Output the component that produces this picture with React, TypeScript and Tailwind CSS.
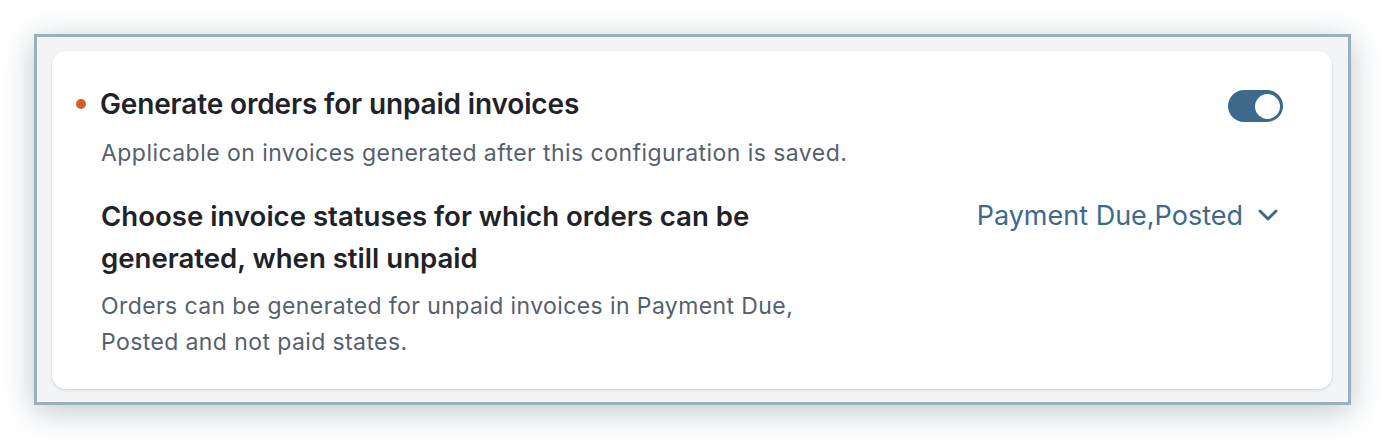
import React from "react";

export default function App() {
  return (
    <div className="w-[1386px] h-[440px] bg-white p-[34px] pr-[35px]" style={{ fontFamily: "Inter, 'Noto Sans', sans-serif" }}>
      <div className="h-[371px] border-[3px] border-[#9ab0bd] bg-[#f3f4f6] pt-[14px] pl-[15px] pr-[16px] shadow-[0_6px_30px_rgba(90,115,130,0.4)]">
        <div className="h-[338px] rounded-[14px] bg-white pl-[24px] pr-[49px] pt-[37px] shadow-[0_1px_3px_rgba(0,0,0,0.15)]">
          <div className="flex items-start justify-between">
            <div className="flex h-[32px] items-center gap-[14px]">
              <span className="h-[10px] w-[10px] rounded-full bg-[#d25e2b]" />
              <span className="text-[28px] font-semibold leading-[32px] tracking-[-0.15px] text-[#1f2329]">Generate orders for unpaid invoices</span>
            </div>
            <div className="relative mt-[2px] h-[32px] w-[55px] rounded-full bg-[#3d6a8a]">
              <span className="absolute right-[1px] top-[1.5px] h-[29px] w-[29px] rounded-full border-[2px] border-[#3d6a8a] bg-white" />
            </div>
          </div>
          <p className="mt-[17px] pl-[25px] text-[23px] leading-[28px] tracking-[0.45px] text-[#56606d]">
            Applicable on invoices generated after this configuration is saved.
          </p>
          <div className="mt-[28px] flex justify-between pl-[25px]">
            <div className="w-[720px]">
              <h3 className="text-[27.6px] font-semibold leading-[42px] text-[#1f2329]">
                Choose invoice statuses for which orders can be generated, when still unpaid
              </h3>
              <p className="mt-[9px] text-[23px] leading-[36px] tracking-[0.4px] text-[#56606d]">
                Orders can be generated for unpaid invoices in Payment Due, Posted and not paid states.
              </p>
            </div>
            <div className="mr-[4px] flex h-[42px] items-center gap-[14px]">
              <span className="text-[27px] leading-[42px] text-[#3d6a8a]">Payment Due,Posted</span>
              <svg width="22" height="14" viewBox="0 0 22 14" fill="none" className="mt-[-2px]">
                <path d="M3 3 L11 11 L19 3" stroke="#3d6a8a" strokeWidth="3" strokeLinecap="round" strokeLinejoin="round" />
              </svg>
            </div>
          </div>
        </div>
      </div>
    </div>
  );
}
